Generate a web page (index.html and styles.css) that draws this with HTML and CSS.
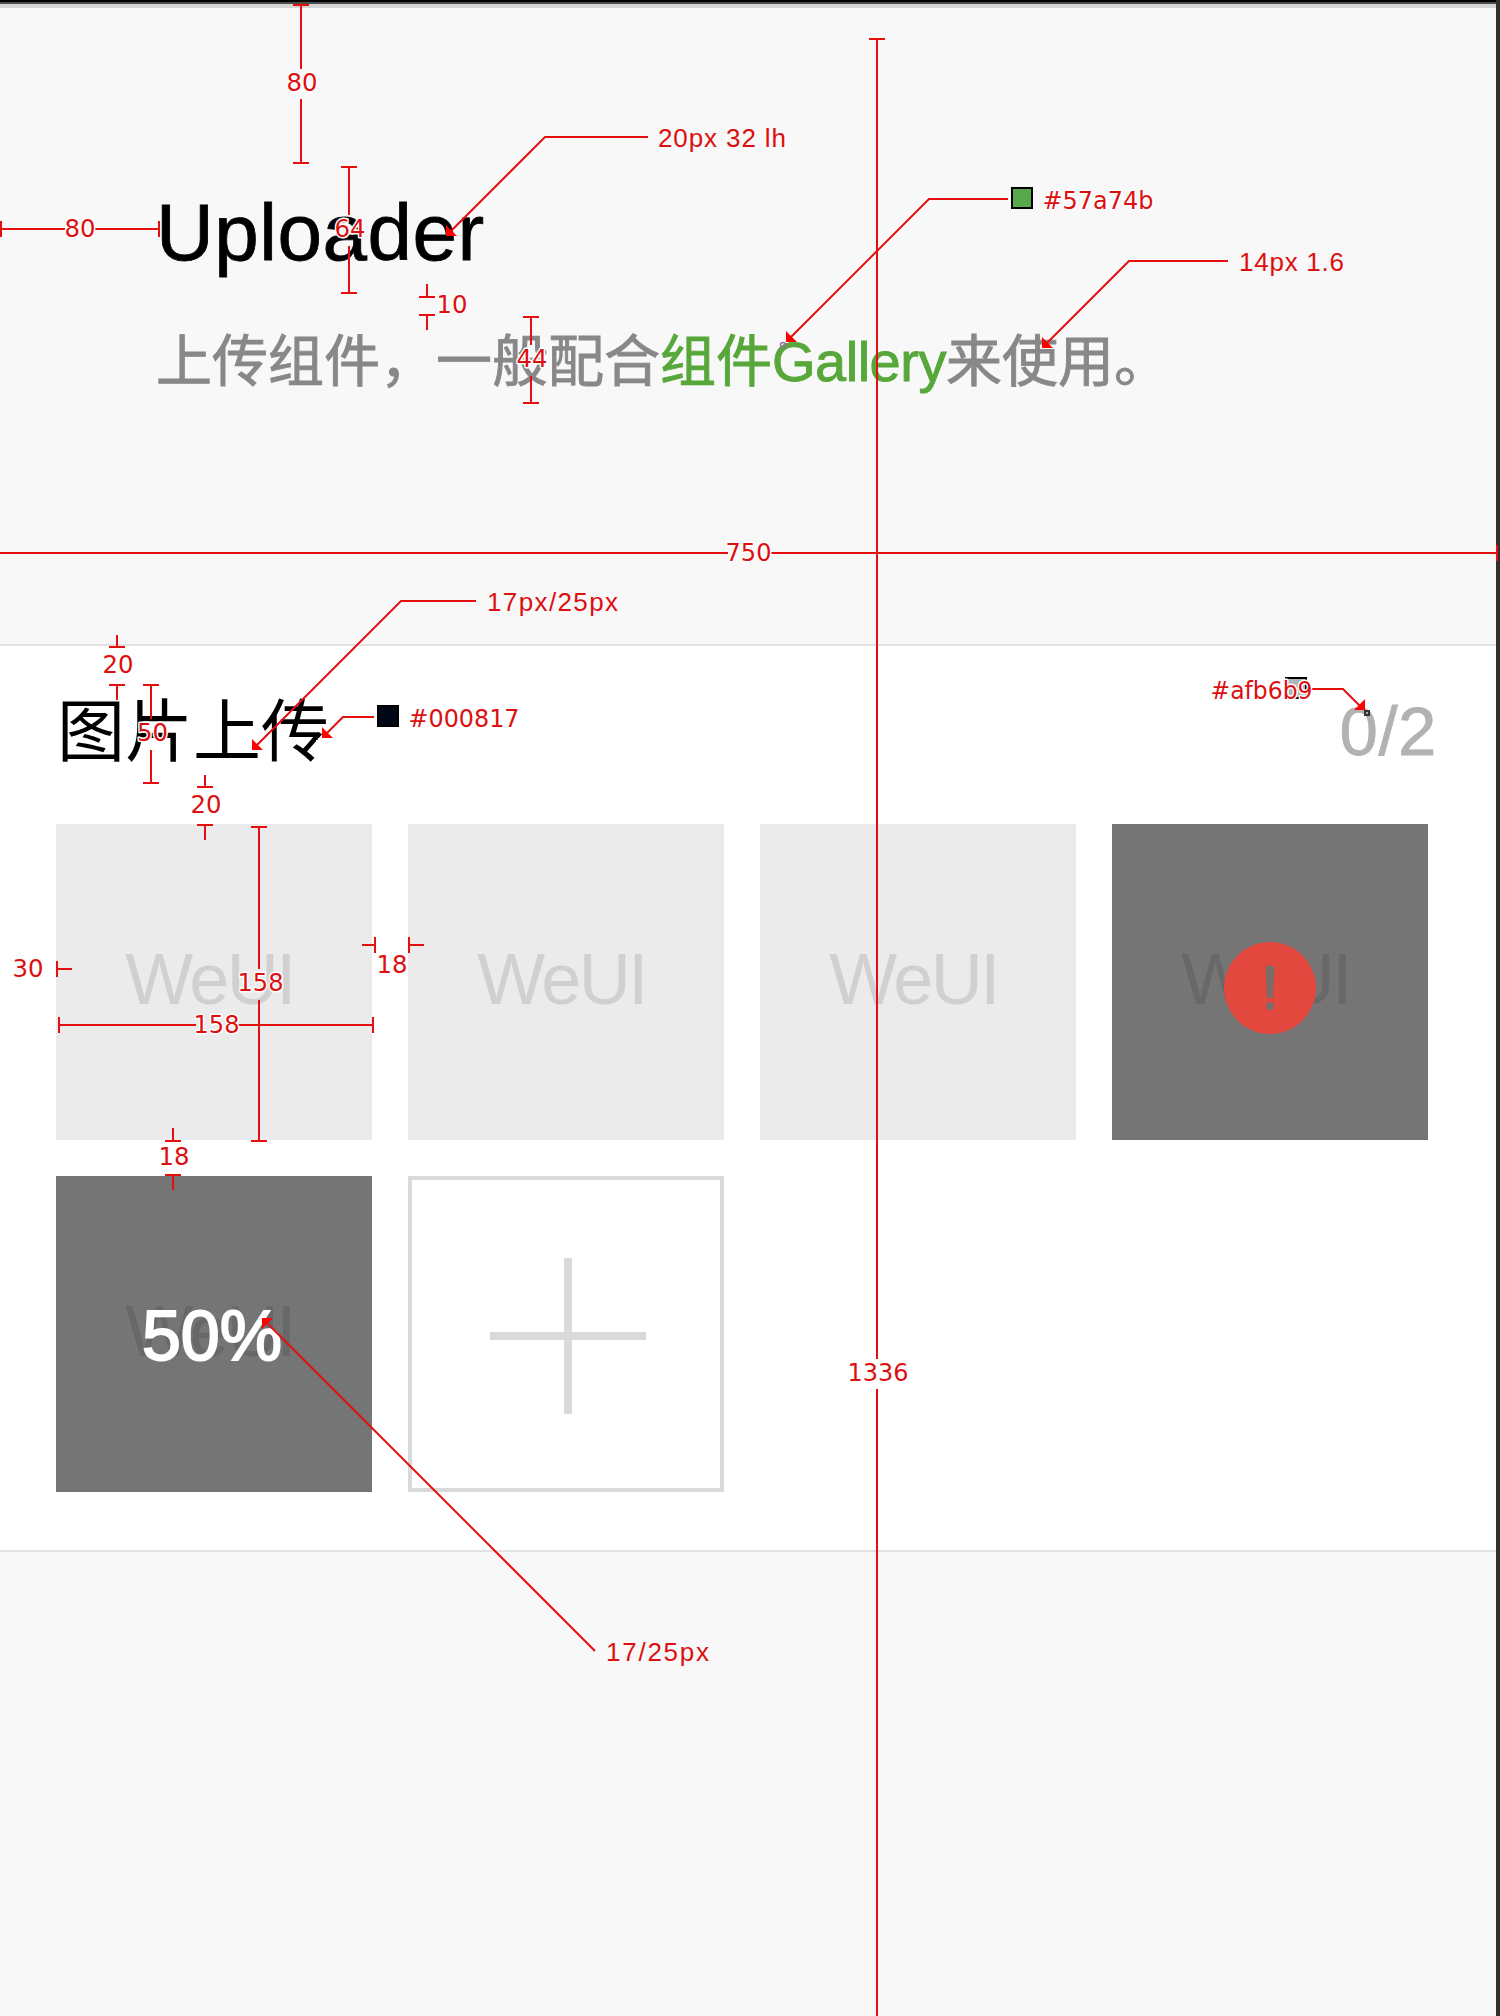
FILE: index.html
```
<!DOCTYPE html>
<html lang="zh-CN">
<head>
<meta charset="utf-8">
<title>Uploader</title>
<link rel="stylesheet" href="styles.css">
</head>
<body>
<div class="screen">
  <header class="intro">
    <h1 class="title">Uploader</h1>
    <p class="desc">上传组件，一般配合<a class="link">组件<span class="latin">Gallery</span></a>来使用。</p>
  </header>
  <main class="panel">
    <div class="panel-head"><h2 class="panel-title">图片上传</h2><span class="count">0/2</span></div>
    <div class="grid">
      <div class="tile"><span class="ph">WeUI</span></div>
      <div class="tile"><span class="ph">WeUI</span></div>
      <div class="tile"><span class="ph">WeUI</span></div>
      <div class="tile dark"><span class="ph">WeUI</span>
        <svg class="warn" viewBox="0 0 92 92"><circle cx="46" cy="46" r="46" fill="#e3483e"/><path d="M41.5 25q4.500-3.500 9 0l-1.500 31h-6z" fill="#7b6c67"/><circle cx="46" cy="64" r="4" fill="#7b6c67"/></svg>
      </div>
      <div class="tile dark"><span class="ph">WeUI</span><span class="percent">50%</span></div>
      <div class="tile add">
        <svg class="plus" viewBox="0 0 156 156"><path d="M78 0V156M0 78H156" stroke="#d9d9d9" stroke-width="8"/></svg>
      </div>
    </div>
  </main>
</div>

<svg class="notes" viewBox="0 0 1500 2016" width="1500" height="2016">
  <g class="lines">
    <path d="M301 5V69M301 99V163M293 5H309M293 163H309"/>
    <path d="M1 229H65M95 229H159M1 221V237M159 221V237"/>
    <path d="M349 167V215M349 246V293M341 167H357M341 293H357"/>
    <path d="M427 284V297M419 297H435M419 315H435M427 315V330"/>
    <path d="M531 317V345M531 376V403M523 317H539M523 403H539"/>
    <path d="M648 137H545L450 232"/>
    <path d="M1008 199H929L790 338"/>
    <path d="M1228 261H1129L1046 344"/>
    <path d="M0 553H728M771 553H1497M1497 545V561"/>
    <path d="M877 39V1359M877 1389V2016M869 39H885"/>
    <path d="M476 601H401L256 746"/>
    <path d="M117 635V647M109 647H125M109 685H125M117 685V700"/>
    <path d="M151 685V719M151 750V783M143 685H159M143 783H159"/>
    <path d="M205 775V787M197 787H213M197 825H213M205 825V840"/>
    <path d="M374 717H343L327 733"/>
    <path d="M1312 689H1343L1361 707"/>
    <path d="M259 827V969M259 1000V1141M251 827H267M251 1141H267"/>
    <path d="M59 1025H196M238 1025H373M59 1017V1033M373 1017V1033"/>
    <path d="M57 961V977M57 969H72"/>
    <path d="M362 945H375M375 937V953M409 937V953M409 945H424"/>
    <path d="M173 1128V1141M165 1141H181M165 1175H181M173 1175V1190"/>
    <path d="M595 1651L268 1324"/>
  </g>
  <g class="tips">
    <path d="M446 225V236H457zM786 331V342H797zM1042 337V348H1053zM252 739V750H263zM322 727V738H333zM1354 710H1365V699zM262 1329V1318H273z"/>
  </g>
  <circle cx="783" cy="345" r="2.500" fill="none" stroke="#9b6fa5" stroke-width="1.500"/>
  <rect x="1365" y="711" width="4" height="4" fill="#aaa" stroke="#333" stroke-width="2"/>
  <path d="M316 741h2M320 741h2M318 739h2" stroke="#fff" stroke-width="2"/>
  <rect x="1012" y="188" width="20" height="20" fill="#57a74b" stroke="#000" stroke-width="2"/>
  <rect x="378" y="706" width="20" height="20" fill="#000817" stroke="#000" stroke-width="2"/>
  <rect x="1286" y="678" width="20" height="20" fill="#afb6b9" stroke="#000" stroke-width="2"/>
  <g class="nums">
    <text x="286.500" y="91" textLength="31" lengthAdjust="spacingAndGlyphs">80</text>
    <text x="64.500" y="237" textLength="31" lengthAdjust="spacingAndGlyphs">80</text>
    <text x="334.500" y="237" textLength="31" lengthAdjust="spacingAndGlyphs">64</text>
    <text x="436.500" y="313" textLength="31" lengthAdjust="spacingAndGlyphs">10</text>
    <text x="516.500" y="367" textLength="31" lengthAdjust="spacingAndGlyphs">44</text>
    <text x="725.500" y="561" textLength="46" lengthAdjust="spacingAndGlyphs">750</text>
    <text x="847.500" y="1381" textLength="61" lengthAdjust="spacingAndGlyphs">1336</text>
    <text x="102.500" y="673" textLength="31" lengthAdjust="spacingAndGlyphs">20</text>
    <text x="137" y="741" textLength="31" lengthAdjust="spacingAndGlyphs">50</text>
    <text x="190.500" y="813" textLength="31" lengthAdjust="spacingAndGlyphs">20</text>
    <text x="237.500" y="991" textLength="46" lengthAdjust="spacingAndGlyphs">158</text>
    <text x="193.500" y="1033" textLength="46" lengthAdjust="spacingAndGlyphs">158</text>
    <text x="12.500" y="977" textLength="31" lengthAdjust="spacingAndGlyphs">30</text>
    <text x="376.500" y="973" textLength="31" lengthAdjust="spacingAndGlyphs">18</text>
    <text x="158.500" y="1165" textLength="31" lengthAdjust="spacingAndGlyphs">18</text>
    <text x="1042.500" y="209" textLength="111" lengthAdjust="spacingAndGlyphs">#57a74b</text>
    <text x="408.500" y="727" textLength="111" lengthAdjust="spacingAndGlyphs">#000817</text>
    <text x="1210.500" y="699" textLength="102" lengthAdjust="spacingAndGlyphs">#afb6b9</text>
  </g>
  <g class="specs">
    <text x="658" y="147" textLength="128" lengthAdjust="spacing">20px 32 lh</text>
    <text x="1239" y="271" textLength="105" lengthAdjust="spacing">14px 1.6</text>
    <text x="487" y="611" textLength="131" lengthAdjust="spacing">17px/25px</text>
    <text x="606" y="1661" textLength="103" lengthAdjust="spacing">17/25px</text>
  </g>
</svg>
</body>
</html>
```
FILE: styles.css
```
* { box-sizing: border-box; }
body {
  margin: 0;
  background: #f8f8f8;
  font-family: "Liberation Sans", "Noto Sans CJK SC", sans-serif;
}
h1, h2, p { margin: 0; font-weight: 400; }
.screen {
  width: 1500px;
  height: 2016px;
  overflow: hidden;
  border-right: 4px solid #2f2f2f;
  background: linear-gradient(#000 0 2px, #4a4a4a 2px 4px, #d5d5d5 4px 8px, #f8f8f8 8px);
}
.intro { padding: 169px 156px 238px; }
.title {
  font-size: 80px;
  line-height: 128px;
  letter-spacing: .5px;
  color: #000;
  -webkit-text-stroke: .8px;
}
.desc {
  margin-top: 21px;
  font-size: 56px;
  line-height: 88px;
  color: #888;
  white-space: nowrap;
  -webkit-text-stroke: .9px;
}
.link { color: #57a73a; }
.latin { letter-spacing: -.5px; }
.panel {
  height: 908px;
  padding: 36px 56px 0;
  background: #fff;
  border-top: 2px solid #e2e2e2;
  border-bottom: 2px solid #e2e2e2;
}
.panel-head {
  display: flex;
  justify-content: space-between;
  margin-bottom: 42px;
  padding: 0 3px 0 1px;
  font-size: 68px;
  line-height: 100px;
}
.panel-title { font-size: 68px; color: #000; }
.count { font-size: 69px; letter-spacing: .5px; color: #b2b2b2; -webkit-text-stroke: .8px; }
.grid {
  display: grid;
  grid-template-columns: repeat(4, 316px);
  grid-auto-rows: 316px;
  gap: 36px;
}
.tile {
  display: grid;
  place-items: center;
  background: #ebebeb;
}
.tile > * { grid-area: 1 / 1; }
.ph {
  padding: 0 9px 6px 0;
  font-size: 72px;
  letter-spacing: -2.5px;
  color: #d0d0d0;
}
.dark { background: #757575; }
.dark .ph { color: #686868; }
.warn { width: 92px; height: 92px; margin-top: 12px; }
.percent {
  padding: 3px 4px 0 0;
  font-size: 70px;
  color: #fff;
  -webkit-text-stroke: 2px #fff;
}
.add { background: #fff; border: 4px solid #d9d9d9; }
.plus { width: 156px; height: 156px; margin: 4px 0 0 4px; }
.notes { position: absolute; left: 0; top: 0; }
.lines { fill: none; stroke: #e60f0f; stroke-width: 2; }
.tips { fill: #f00; }
.nums {
  font: 25px "DejaVu Sans", sans-serif;
  fill: #dc1010;
  stroke: #fff;
  stroke-width: 3;
  stroke-linejoin: round;
  paint-order: stroke;
}
.specs { font: 26px "Liberation Sans", sans-serif; fill: #dc1010; }
```
